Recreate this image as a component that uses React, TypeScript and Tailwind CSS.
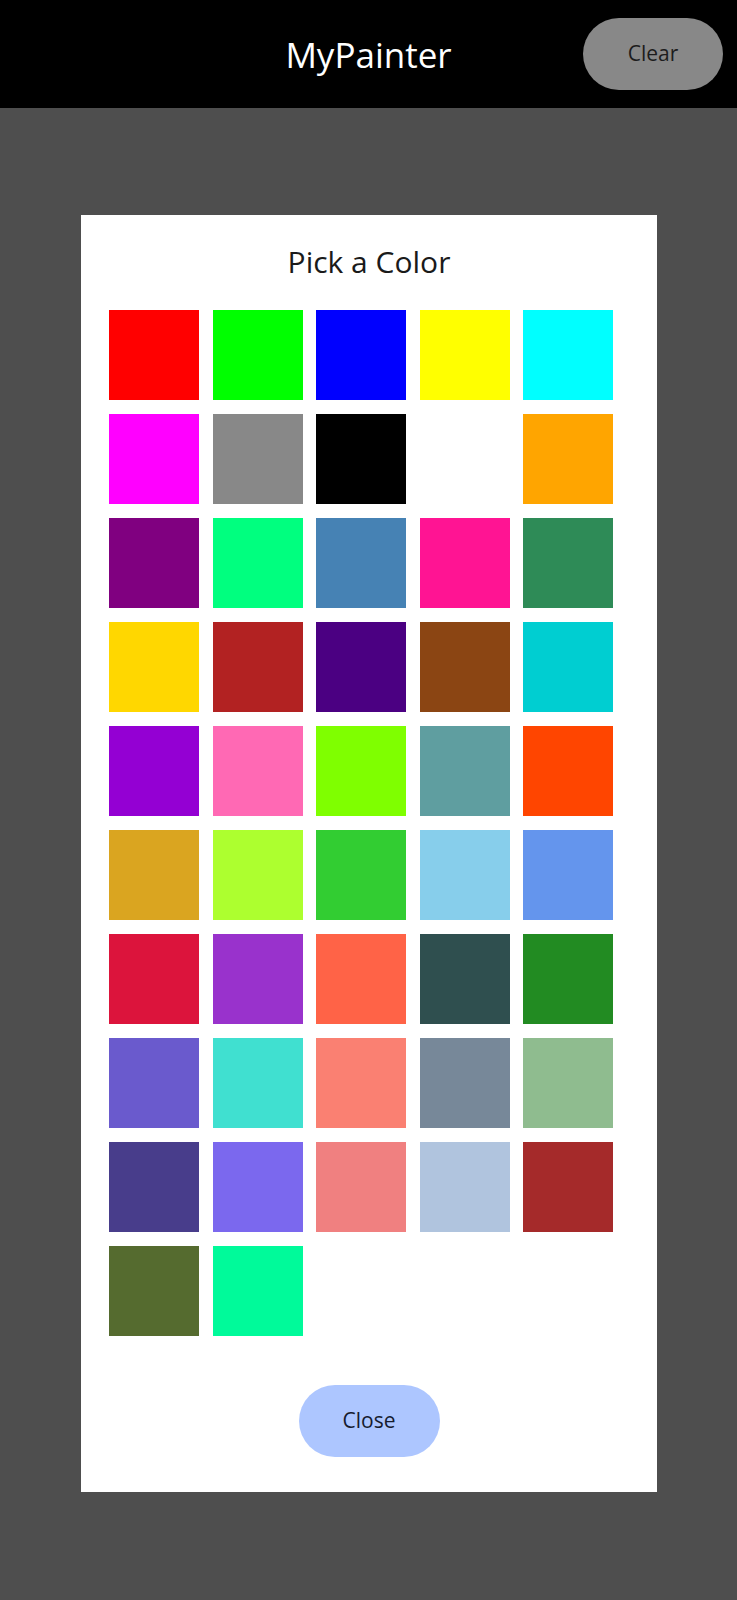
const colors = [
  "#ff0000", "#00ff00", "#0000ff", "#ffff00", "#00ffff",
  "#ff00ff", "#888888", "#000000", "#ffffff", "#ffa500",
  "#800080", "#00ff7f", "#4682b4", "#ff1493", "#2e8b57",
  "#ffd700", "#b22222", "#4b0082", "#8b4513", "#00ced1",
  "#9400d3", "#ff69b4", "#7fff00", "#5f9ea0", "#ff4500",
  "#daa520", "#adff2f", "#32cd32", "#87ceeb", "#6495ed",
  "#dc143c", "#9932cc", "#ff6347", "#2f4f4f", "#228b22",
  "#6a5acd", "#40e0d0", "#fa8072", "#778899", "#8fbc8f",
  "#483d8b", "#7b68ee", "#f08080", "#b0c4de", "#a52a2a",
  "#556b2f", "#00fa9a",
];

const App = () => {
  return (
    <div className="min-h-[1600px] w-[737px] bg-[#4e4e4e] font-['Open_Sans',sans-serif]">
      {/* top bar */}
      <header className="relative h-[108px] bg-black flex items-center justify-center">
        <h1 className="text-[35px] text-white leading-none">MyPainter</h1>
        <button className="absolute left-[583px] top-[18px] w-[140px] h-[72px] rounded-full bg-[#888888] text-[21px] text-[#1c1c1c]">
          Clear
        </button>
      </header>

      {/* color picker dialog */}
      <div className="ml-[81px] mt-[107px] w-[576px] h-[1277px] bg-white flex flex-col">
        <h2 className="mt-[31px] text-center text-[30px] leading-[32px] text-[#1a1a1a]">Pick a Color</h2>

        <div className="mt-[32px] ml-[28px] grid grid-cols-[repeat(5,90px)] gap-x-[13.6px] gap-y-[14px]">
          {colors.map((c, i) => (
            <div key={i} className="h-[90px]" style={{ backgroundColor: c }} />
          ))}
        </div>

        <div className="mt-[49px] flex justify-center">
          <button className="w-[141px] h-[72px] rounded-full bg-[#adc6ff] text-[21px] text-[#161b2e]">
            Close
          </button>
        </div>
      </div>
    </div>
  );
};

export default App;
